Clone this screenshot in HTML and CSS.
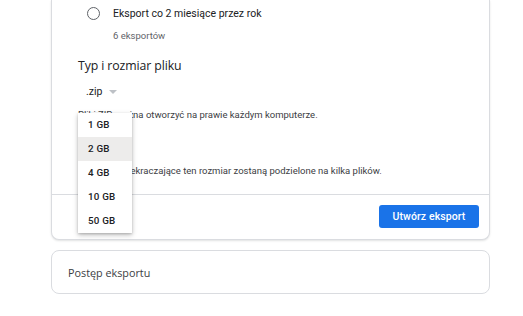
FILE: index.html
```html
<!DOCTYPE html>
<html lang="pl">
<head>
<meta charset="utf-8">
<link rel="stylesheet" href="styles.css">
</head>
<body>
<div class="page">
  <section class="card main">
    <div class="options">
      <div class="radio-row">
        <span class="radio"></span>
        <div class="radio-text">
          <div class="radio-label">Eksport co 2 miesiące przez rok</div>
          <div class="radio-sub">6 eksportów</div>
        </div>
      </div>
    </div>
    <div class="filetype">
      <h2 class="section-title">Typ i rozmiar pliku</h2>
      <div class="select"><span class="select-value">.zip</span><span class="caret"></span></div>
      <p class="hint">Pliki ZIP można otworzyć na prawie każdym komputerze.</p>
      <div class="size-wrap">
        <div class="select size"><span class="select-value">2 GB</span><span class="caret"></span></div>
        <ul class="menu">
          <li class="menu-item">1 GB</li>
          <li class="menu-item selected">2 GB</li>
          <li class="menu-item">4 GB</li>
          <li class="menu-item">10 GB</li>
          <li class="menu-item">50 GB</li>
        </ul>
      </div>
      <p class="hint last">Eksporty przekraczające ten rozmiar zostaną podzielone na kilka plików.</p>
    </div>
    <div class="footer">
      <button class="primary">Utwórz eksport</button>
    </div>
  </section>
  <section class="card progress">
    <div class="progress-title">Postęp eksportu</div>
  </section>
</div>
</body>
</html>
```
FILE: styles.css
```css
* { box-sizing: border-box; }
html, body { margin: 0; padding: 0; background: #fff; }
body { font-family: Roboto, "Noto Sans", sans-serif; color: #202124; }
.page { width: 439px; margin-left: 51px; display: flex; flex-direction: column; gap: 10px; }
.card { border: 1px solid #dadce0; border-radius: 8px; background: #fff; }
.card.main { border-top: none; border-radius: 0 0 8px 8px; box-shadow: 0 1px 2px rgba(60,64,67,0.15); }
.options { padding: 0 0 0 35px; }
.radio-row { display: flex; align-items: flex-start; gap: 13px; padding-top: 7px; }
.radio { width: 13px; height: 13px; border: 1.3px solid #5f6368; border-radius: 50%; flex: none; margin-top: 0; }
.radio-label { font-size: 10.5px; line-height: 14px; color: #202124; }
.radio-sub { font-size: 9.5px; line-height: 14px; color: #5f6368; margin-top: 8px; }
.filetype { padding: 15px 26px 16px 26px; }
.section-title { margin: 0; font-family: "Open Sans", Roboto, sans-serif; font-weight: 400; font-size: 12.3px; line-height: 16px; color: #202124; letter-spacing: -0.1px; }
.select { display: inline-flex; align-items: center; gap: 7px; padding: 0 0 0 8px; height: 20px; margin-top: 7px; }
.select-value { font-size: 10.5px; color: #202124; }
.caret { width: 0; height: 0; border-left: 4px solid transparent; border-right: 4px solid transparent; border-top: 4px solid #bdc1c6; margin-top: 1px; }
.hint { margin: 7px 0 0 0; font-size: 9.5px; line-height: 14px; color: #3c4043; }
.hint.last { margin-top: 0; }
.size-wrap { position: relative; height: 42px; }
.size-wrap .select { margin-top: 17px; }
.menu { position: absolute; left: 0; top: -9px; width: 54px; margin: 0; padding: 0; list-style: none; background: #fff; box-shadow: 0 2px 5px rgba(0,0,0,0.25), 0 1px 2px rgba(0,0,0,0.15); z-index: 2; }
.menu-item { height: 24px; line-height: 24px; padding-left: 10px; font-size: 9.8px; font-weight: 500; color: #202124; letter-spacing: 0.2px; }
.menu-item.selected { background: #edeceb; }
.footer { border-top: 1px solid #dadce0; padding: 10px 10px 11px; display: flex; justify-content: flex-end; }
.primary { background: #1a73e8; color: #fff; border: none; border-radius: 3px; width: 100px; height: 23px; font-family: Roboto, sans-serif; font-weight: 500; font-size: 10.5px; padding: 0; letter-spacing: 0.1px; }
.progress { height: 44px; display: flex; align-items: center; padding-left: 16px; }
.progress-title { font-family: "Open Sans", Roboto, sans-serif; font-size: 10.8px; color: #3c4043; }
```
